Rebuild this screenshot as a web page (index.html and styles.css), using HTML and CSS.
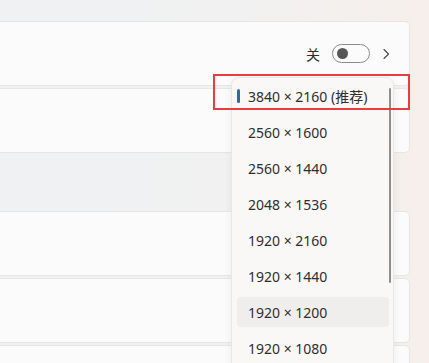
FILE: index.html
```html
<!DOCTYPE html>
<html lang="zh-CN">
<head>
  <meta charset="UTF-8" />
  <title>显示分辨率</title>
  <link rel="stylesheet" href="styles.css">
</head>
<body>
  <div class="page">
    <div class="settings">
      <div class="card card-first">
        <div class="card-actions">
          <span class="state">关</span>
          <span class="toggle"><span class="knob"></span></span>
          <svg class="chevron" width="10" height="12" viewBox="0 0 10 12">
            <path d="M3 1.5 L7.5 6 L3 10.5" fill="none" stroke="#444" stroke-width="1.1" stroke-linecap="round" stroke-linejoin="round"/>
          </svg>
        </div>
      </div>
      <div class="card"></div>
      <div class="section-gap"></div>
      <div class="card"></div>
      <div class="card"></div>
      <div class="card"></div>
    </div>

    <div class="dropdown">
      <div class="item selected"><span class="item-label">3840 × 2160 (推荐)</span></div>
      <div class="item"><span class="item-label">2560 × 1600</span></div>
      <div class="item"><span class="item-label">2560 × 1440</span></div>
      <div class="item"><span class="item-label">2048 × 1536</span></div>
      <div class="item"><span class="item-label">1920 × 2160</span></div>
      <div class="item"><span class="item-label">1920 × 1440</span></div>
      <div class="item hover"><span class="item-label">1920 × 1200</span></div>
      <div class="item"><span class="item-label">1920 × 1080</span></div>
      <div class="scrollbar"></div>
    </div>

    <div class="highlight-box"></div>
  </div>
</body>
</html>
```

FILE: styles.css
```css
body {
  margin: 0;
  font-family: "Segoe UI", "Noto Sans", "Noto Sans CJK SC", sans-serif;
  color: #2e2e2e;
  overflow: hidden;
}
.page {
  position: relative;
  width: 429px;
  height: 363px;
  overflow: hidden;
  background: linear-gradient(90deg, #eff1f3 0%, #f1f1f1 55%, #f6efeb 100%);
}
.settings {
  display: flex;
  flex-direction: column;
  gap: 2px;
  padding-top: 21px;
  margin-left: -10px;
  width: 420px;
}
.card {
  height: 63px;
  background-color: #fbfbfb;
  border: 1px solid #e6e6e6;
  border-radius: 5px;
  flex-shrink: 0;
}
.card-first {
  display: flex;
  align-items: center;
  justify-content: flex-end;
}
.section-gap {
  height: 54px;
  flex-shrink: 0;
}
.card-actions {
  display: flex;
  align-items: center;
  padding-right: 18px;
}
.state {
  font-size: 14px;
  margin-right: 12px;
}
.toggle {
  box-sizing: border-box;
  width: 38px;
  height: 19px;
  border: 1px solid #8b8b8b;
  border-radius: 10px;
  display: flex;
  align-items: center;
  padding-left: 4px;
  margin-right: 11px;
}
.knob {
  width: 11px;
  height: 11px;
  border-radius: 50%;
  background-color: #575757;
}
.chevron {
  display: block;
}
.dropdown {
  position: absolute;
  left: 231px;
  top: 77px;
  width: 163px;
  height: 300px;
  background-color: #f9f8f7;
  border: 1px solid #e9e7e5;
  border-radius: 8px;
  box-shadow: 0 2px 8px rgba(0, 0, 0, 0.06);
  box-sizing: border-box;
}
.item {
  height: 36px;
  padding: 3px 4px 3px 5px;
  box-sizing: border-box;
}
.item-label {
  display: flex;
  align-items: center;
  height: 30px;
  padding-left: 11px;
  border-radius: 4px;
  font-size: 14px;
  position: relative;
}
.item.hover .item-label {
  background-color: #efeeed;
}
.item.selected .item-label::before {
  content: "";
  position: absolute;
  left: 0;
  top: 8px;
  width: 3px;
  height: 14px;
  border-radius: 2px;
  background-color: #2a6f93;
}
.scrollbar {
  position: absolute;
  left: 157px;
  top: 10px;
  width: 2px;
  height: 195px;
  border-radius: 1px;
  background-color: #8e8e8e;
}
.highlight-box {
  position: absolute;
  left: 213px;
  top: 74px;
  width: 197px;
  height: 36px;
  box-sizing: border-box;
  border: 2px solid #ea3b3e;
}
```
